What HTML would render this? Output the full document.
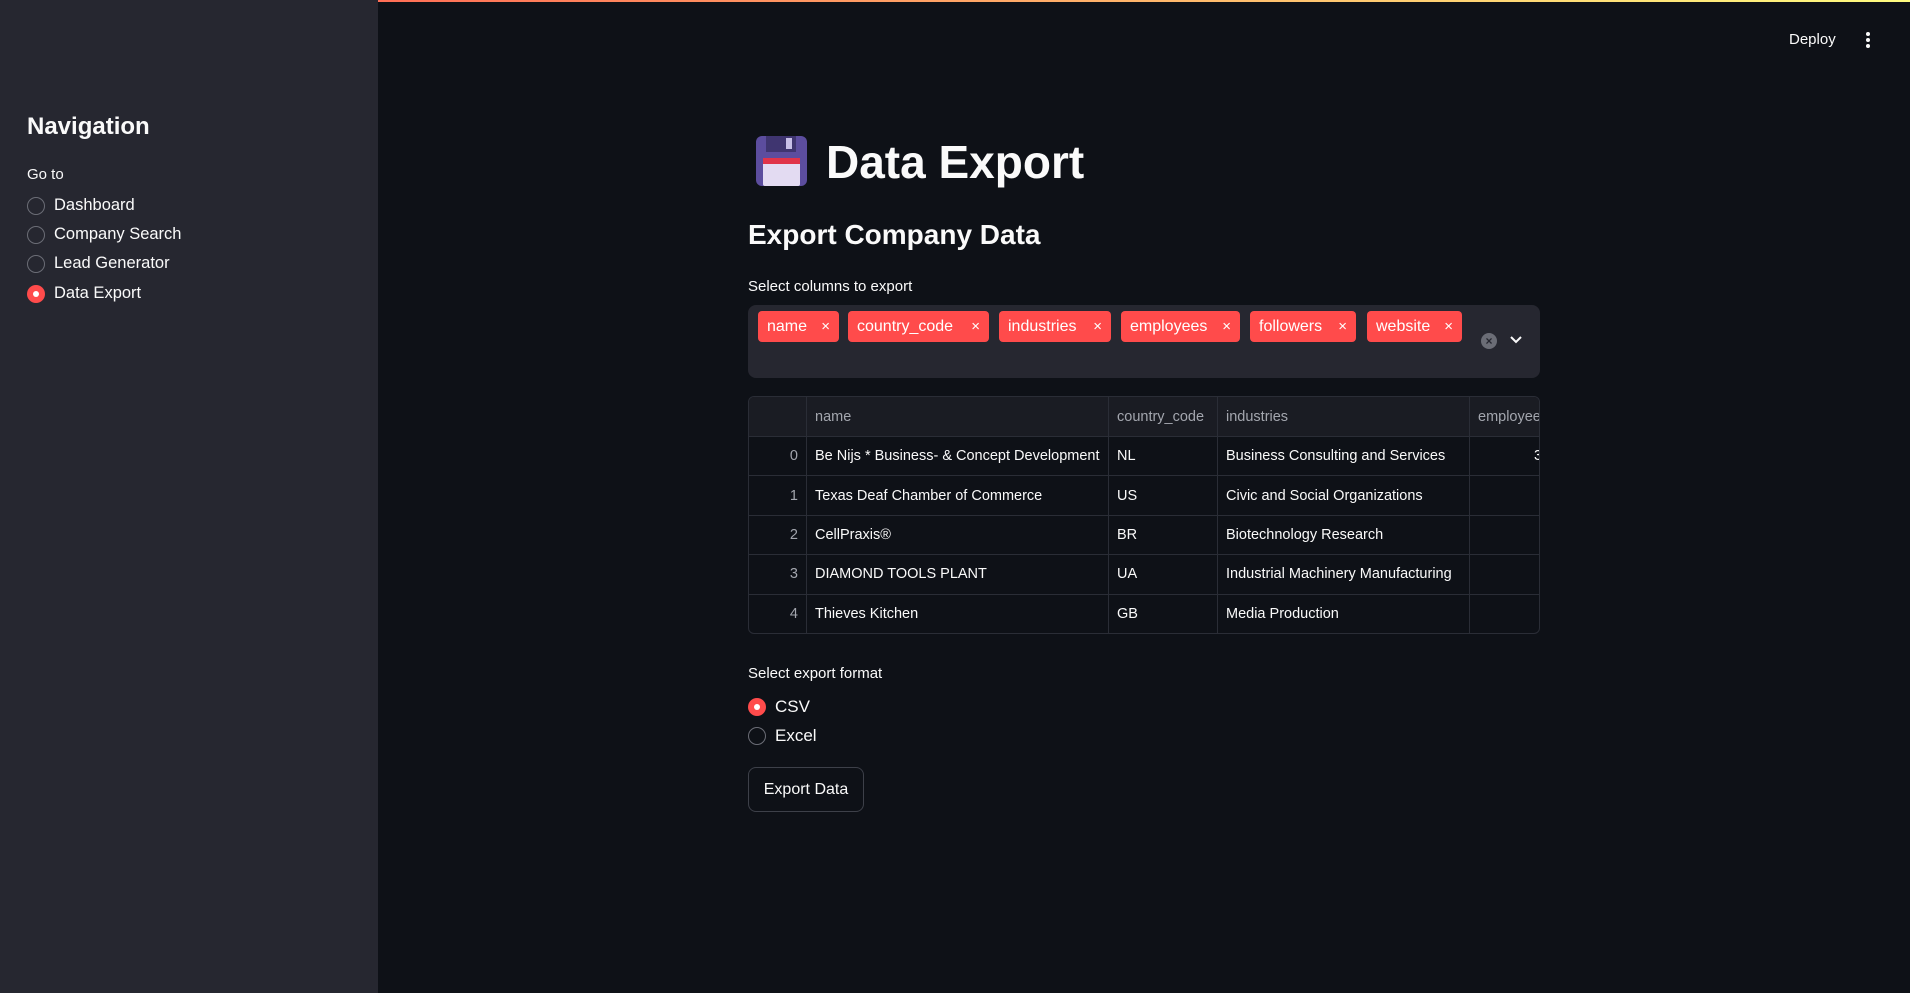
<!DOCTYPE html>
<html><head><meta charset="utf-8"><style>
*{margin:0;padding:0;box-sizing:border-box}
body{width:1910px;height:993px;background:#0e1117;color:#fafafa;font-family:"Liberation Sans",sans-serif;position:relative;overflow:hidden}
.a{position:absolute;white-space:nowrap}
.topbar{position:absolute;left:0;top:0;width:1910px;height:2px;background:linear-gradient(90deg,#ff4b4b,#fffd80)}
.side{position:absolute;left:0;top:0;width:378px;height:993px;background:#262730}
.radio{position:absolute;width:18px;height:18px;border-radius:50%;border:1.5px solid #6b6d76}
.radio.on{border:none;background:#ff4b4b}
.radio.on::after{content:"";position:absolute;left:6px;top:6px;width:6px;height:6px;border-radius:50%;background:#fff}
.tag{position:absolute;top:311px;height:31px;background:#ff4b4b;border-radius:4px;color:#fff;font-size:16px;line-height:31px;padding-left:9px}
.tag span{position:absolute;right:9px;top:0;font-size:15px}
table{border-collapse:collapse;font-size:14.5px;table-layout:fixed;width:870px}
td{height:39.4px;border:1px solid #2a2d36;padding:0 8px;color:#fafafa;white-space:nowrap;overflow:hidden}
th{height:40px;border:1px solid #2a2d36;padding:0 8px;font-weight:normal;color:#a3a6ae;text-align:left;background:#1a1c23;white-space:nowrap;overflow:hidden}
td.i{text-align:right;color:#a3a6ae}
</style></head><body>
<div class="topbar"></div>
<div class="side">
 <div class="a" style="left:27px;top:113px;font-size:24px;font-weight:bold">Navigation</div>
 <div class="a" style="left:27px;top:166px;font-size:15px">Go to</div>
 <div class="radio" style="left:27px;top:197px"></div><div class="a" style="left:54px;top:196px;font-size:16.5px">Dashboard</div>
 <div class="radio" style="left:27px;top:226px"></div><div class="a" style="left:54px;top:225px;font-size:16.5px">Company Search</div>
 <div class="radio" style="left:27px;top:255px"></div><div class="a" style="left:54px;top:254px;font-size:16.5px">Lead Generator</div>
 <div class="radio on" style="left:27px;top:285px"></div><div class="a" style="left:54px;top:284px;font-size:16.5px">Data Export</div>
</div>
<div class="a" style="left:1789px;top:31px;font-size:15px">Deploy</div>
<div class="a" style="left:1866px;top:32px;width:4px;height:4px;border-radius:50%;background:#fafafa"></div>
<div class="a" style="left:1866px;top:38px;width:4px;height:4px;border-radius:50%;background:#fafafa"></div>
<div class="a" style="left:1866px;top:44px;width:4px;height:4px;border-radius:50%;background:#fafafa"></div>
<svg class="a" style="left:756px;top:136px" width="51" height="50" viewBox="0 0 51 50"><rect x="0" y="0" width="51" height="50" rx="6" fill="#5c4d9e"/><rect x="10" y="0" width="30" height="16" fill="#3f3570"/><rect x="30" y="2" width="6" height="11" fill="#c8c0e8"/><rect x="7" y="22" width="37" height="28" rx="2" fill="#e3dbf2"/><rect x="7" y="22" width="37" height="6" fill="#e0344a"/></svg>
<div class="a" style="left:826px;top:135px;font-size:46px;font-weight:bold">Data Export</div>
<div class="a" style="left:748px;top:219px;font-size:28px;font-weight:bold">Export Company Data</div>
<div class="a" style="left:748px;top:278px;font-size:15px">Select columns to export</div>
<div class="a" style="left:748px;top:305px;width:792px;height:73px;background:#262730;border-radius:8px"></div>
<div class="tag" style="left:758px;width:81px">name<span>×</span></div>
<div class="tag" style="left:848px;width:141px">country_code<span>×</span></div>
<div class="tag" style="left:999px;width:112px">industries<span>×</span></div>
<div class="tag" style="left:1121px;width:119px">employees<span>×</span></div>
<div class="tag" style="left:1250px;width:106px">followers<span>×</span></div>
<div class="tag" style="left:1367px;width:95px">website<span>×</span></div>
<div class="a" style="left:1481px;top:333px;width:16px;height:16px;border-radius:50%;background:#6b6d76;color:#262730;font-size:12px;line-height:16px;text-align:center;font-weight:bold">×</div>
<svg class="a" style="left:1509px;top:335px" width="14" height="10"><path d="M2 2 L7 7 L12 2" stroke="#fafafa" stroke-width="2" fill="none"/></svg>
<div class="a" style="left:748px;top:396px;width:792px;height:238px;overflow:hidden;border:1px solid #2a2d36;border-radius:6px">
<table style="margin:-1px">
<colgroup><col style="width:58px"><col style="width:302px"><col style="width:109px"><col style="width:252px"><col style="width:150px"></colgroup>
<tr><th></th><th>name</th><th>country_code</th><th>industries</th><th>employees</th></tr>
<tr><td class="i">0</td><td>Be Nijs * Business- &amp; Concept Development</td><td>NL</td><td>Business Consulting and Services</td><td style="padding-left:64px">3</td></tr>
<tr><td class="i">1</td><td>Texas Deaf Chamber of Commerce</td><td>US</td><td>Civic and Social Organizations</td><td></td></tr>
<tr><td class="i">2</td><td>CellPraxis®</td><td>BR</td><td>Biotechnology Research</td><td></td></tr>
<tr><td class="i">3</td><td>DIAMOND TOOLS PLANT</td><td>UA</td><td>Industrial Machinery Manufacturing</td><td></td></tr>
<tr><td class="i">4</td><td>Thieves Kitchen</td><td>GB</td><td>Media Production</td><td></td></tr>
</table></div>
<div class="a" style="left:748px;top:665px;font-size:15px">Select export format</div>
<div class="radio on" style="left:748px;top:698px"></div><div class="a" style="left:775px;top:697px;font-size:17px">CSV</div>
<div class="radio" style="left:748px;top:727px"></div><div class="a" style="left:775px;top:726px;font-size:17px">Excel</div>
<div class="a" style="left:748px;top:767px;width:116px;height:45px;border:1px solid #3d4049;border-radius:8px;font-size:16px;line-height:43px;text-align:center">Export Data</div>
</body></html>
